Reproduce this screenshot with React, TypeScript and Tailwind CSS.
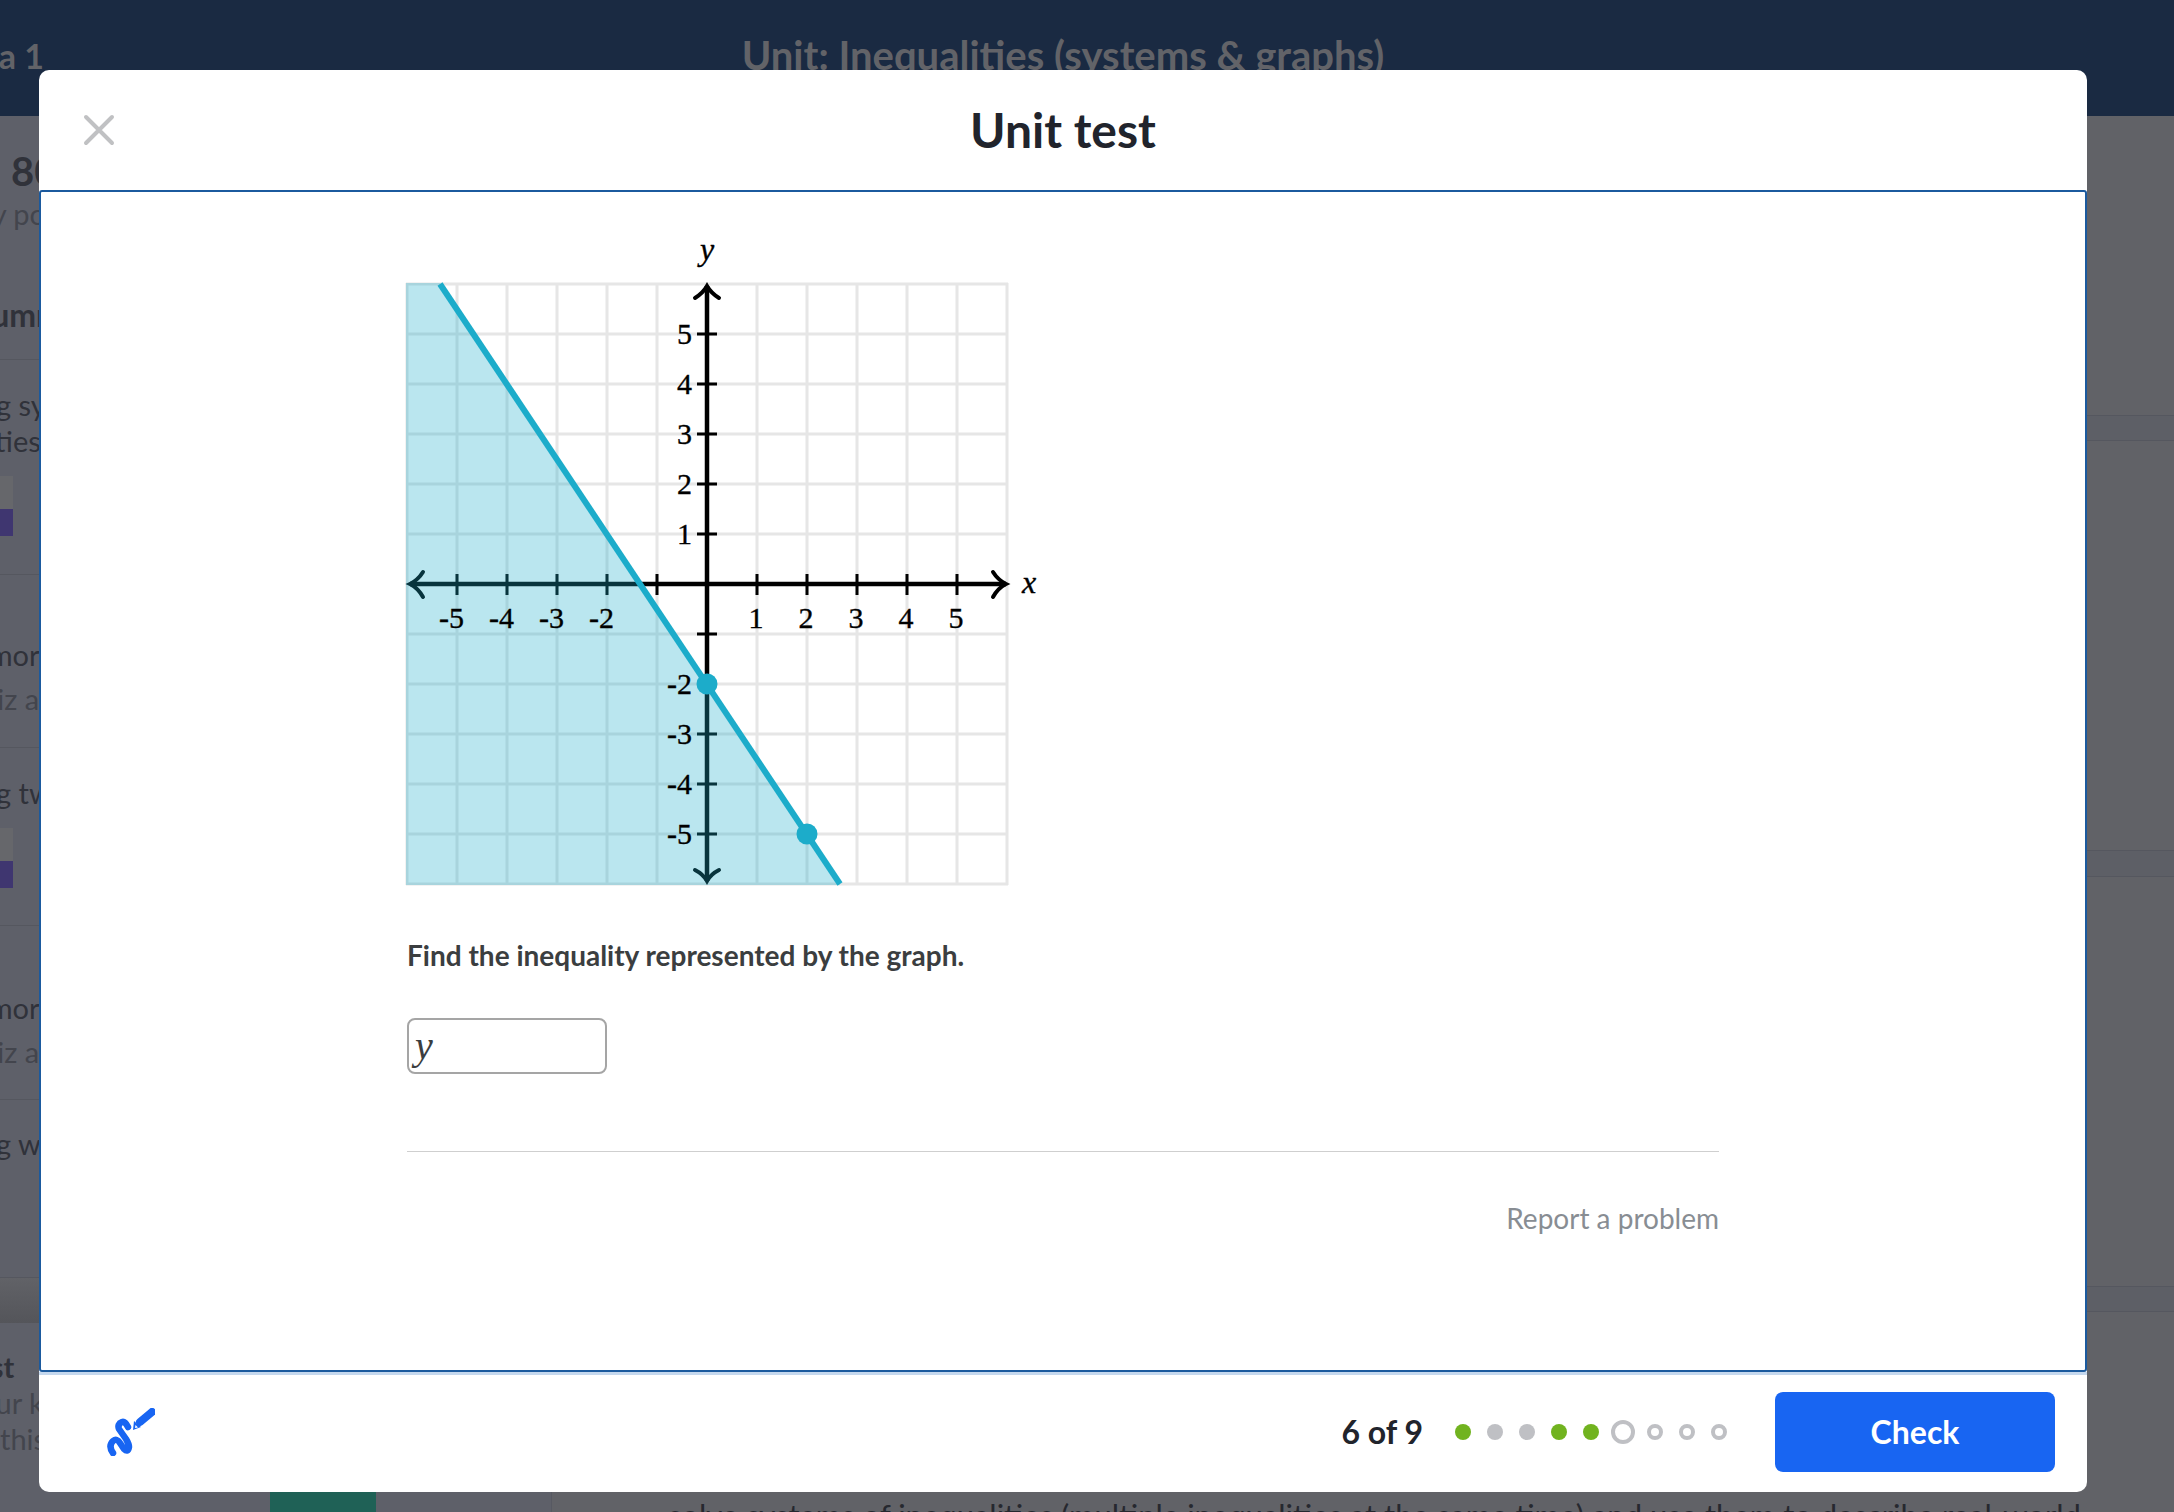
import React from "react";

const lato = '[font-family:Lato,"Liberation_Sans",sans-serif]';

function Graph() {
  const grid: number[] = [];
  for (let i = 0; i <= 12; i++) grid.push(408 + i * 50);
  const gridY: number[] = [];
  for (let i = 0; i <= 12; i++) gridY.push(283 + i * 50);
  const ox = 708;
  const oy = 583;
  const ticks = [-5, -4, -3, -2, -1, 1, 2, 3, 4, 5];
  const serif = '"Liberation Serif", serif';
  return (
    <svg width={650} height={660} viewBox="401 229 650 660" className="block">
      {grid.map((x) => (
        <line key={"v" + x} x1={x} y1={282} x2={x} y2={884} stroke="#e6e6e6" strokeWidth={3} />
      ))}
      {gridY.map((y) => (
        <line key={"h" + y} x1={407} y1={y} x2={1009} y2={y} stroke="#e6e6e6" strokeWidth={3} />
      ))}
      <line x1={411} y1={oy} x2={1007} y2={oy} stroke="#000" strokeWidth={4.5} />
      <line x1={ox} y1={285} x2={ox} y2={880} stroke="#000" strokeWidth={4.5} />
      <path d="M424 571 Q419 579 411 583 Q419 587 424 596" fill="none" stroke="#000" strokeWidth={4} strokeLinecap="round" />
      <path d="M994 571 Q999 579 1007 583 Q999 587 994 596" fill="none" stroke="#000" strokeWidth={4} strokeLinecap="round" />
      <path d="M696 297 Q704 292 708 285 Q712 292 720 297" fill="none" stroke="#000" strokeWidth={4} strokeLinecap="round" />
      <path d="M696 869 Q704 873 708 880 Q712 873 720 869" fill="none" stroke="#000" strokeWidth={4} strokeLinecap="round" />
      {ticks.map((t) => (
        <line key={"tx" + t} x1={ox + t * 50} y1={573} x2={ox + t * 50} y2={594} stroke="#000" strokeWidth={3} />
      ))}
      {ticks.map((t) => (
        <line key={"ty" + t} x1={698} y1={oy + t * 50} x2={718} y2={oy + t * 50} stroke="#000" strokeWidth={3} />
      ))}
      <polygon points="407,282 441,282 841,884 407,884" fill="#1cacca" fillOpacity={0.3} />
      <line x1={441} y1={283} x2={841} y2={883} stroke="#1cacca" strokeWidth={6} />
      <circle cx={708} cy={683} r={10.5} fill="#1cacca" />
      <circle cx={808} cy={833} r={10.5} fill="#1cacca" />
      <g fontFamily={serif} fontSize={30} fill="#000" stroke="#000" strokeWidth={0.35}>
        {[1, 2, 3, 4, 5].map((n) => (
          <text key={"xl" + n} x={ox + n * 50 - 1} y={627} textAnchor="middle">
            {n}
          </text>
        ))}
        {[-5, -4, -3, -2].map((n) => (
          <text key={"xn" + n} x={ox + n * 50 + 7} y={627} textAnchor="end">
            {n}
          </text>
        ))}
        {[5, 4, 3, 2, 1, -2, -3, -4, -5].map((n) => (
          <text key={"yl" + n} x={693} y={oy - n * 50 + 10} textAnchor="end">
            {n}
          </text>
        ))}
        <text x={708} y={259} textAnchor="middle" fontStyle="italic" fontSize={32}>
          y
        </text>
        <text x={1030} y={592} textAnchor="middle" fontStyle="italic" fontSize={32}>
          x
        </text>
      </g>
    </svg>
  );
}

function PencilIcon() {
  return (
    <svg width={48} height={48} viewBox="0 0 48 48" className="block">
      <path
        d="M6 45 Q1 38 6 33 Q10 30 13 35 L17 41 Q21 45 22 39 Q22 36 19 31 L12 21 Q10 16 15 14 Q18 13 21 19"
        fill="none"
        stroke="#1865f2"
        strokeWidth={6.5}
        strokeLinecap="round"
        strokeLinejoin="round"
      />
      <path d="M33 14 L45 4" stroke="#1865f2" strokeWidth={8} strokeLinecap="round" />
      <path d="M26 22 L27 13 L34 19 Z" fill="#1865f2" />
      <path d="M28 20 L28.5 17 L31 19.5 Z" fill="#fff" />
    </svg>
  );
}

function Dots() {
  const items = ["g", "x", "x", "g", "g", "big", "o", "o", "o"];
  return (
    <div className="flex items-center">
      {items.map((k, i) => (
        <div key={i} className="flex h-[32px] w-[32px] items-center justify-center">
          {k === "g" && <div className="h-[16px] w-[16px] rounded-full bg-[#71b31f]" />}
          {k === "x" && <div className="h-[16px] w-[16px] rounded-full bg-[#bfc0c4]" />}
          {k === "big" && <div className="h-[24px] w-[24px] rounded-full border-[4px] border-[#bfc0c4]" />}
          {k === "o" && <div className="h-[16px] w-[16px] rounded-full border-[4px] border-[#bfc0c4]" />}
        </div>
      ))}
    </div>
  );
}

type Line = { t: string; shift: number; className: string };

function LeftRow({ h, lines, chart }: { h: number; lines: Line[]; chart?: boolean }) {
  return (
    <div className="shrink-0 overflow-hidden border-b border-[#55575f]" style={{ height: h }}>
      <div className="whitespace-nowrap">
        {lines.map((l, i) => (
          <div key={i} className={l.className + " text-[29px] leading-[36px]"} style={{ marginLeft: -l.shift }}>
            {l.t}
          </div>
        ))}
      </div>
      {chart && (
        <div className="mt-[17px] w-[13px]">
          <div className="h-[33px] bg-[#66676b]" />
          <div className="h-[27px] bg-[#3f3670]" />
        </div>
      )}
    </div>
  );
}

export default function App() {
  const dark = "text-[#30323a]";
  const soft = "text-[#43454d]";
  return (
    <div className={"relative h-[1512px] w-[2174px] overflow-hidden bg-[#616267] " + lato}>
      <header className="grid h-[116px] grid-cols-[1fr_auto_1fr] items-center bg-[#1a2a42] pb-[6px] pr-[48px]">
        <div className="flex w-[44px] justify-end whitespace-nowrap text-[34px] font-bold text-[#626368]">Algebra 1</div>
        <div className="text-[40px] font-bold text-[#626368]">Unit: Inequalities (systems &amp; graphs)</div>
        <div />
      </header>
      <div className="flex h-[1396px]">
        <aside className="flex w-[552px] shrink-0 flex-col overflow-hidden border-r border-[#575962] bg-[#5e6069]">
          <div className="h-[244px] shrink-0 overflow-hidden border-b border-[#55575f] pt-[30px] whitespace-nowrap">
            <div className="ml-[11px] text-[40px] font-bold leading-[50px] text-[#30323a]">80%</div>
            <div className="-ml-[98px] text-[29px] leading-[36px] text-[#43454d]">Mastery points</div>
            <div className="-ml-[26px] mt-[63px] text-[32px] font-bold leading-[40px] text-[#30323a]">Summary</div>
          </div>
          <LeftRow
            h={215}
            chart
            lines={[
              { t: "Solving systems of", shift: 81, className: dark + " pt-[27px]" },
              { t: "inequalities", shift: 104, className: dark },
            ]}
          />
          <LeftRow
            h={173}
            lines={[
              { t: "Learn more", shift: 89, className: dark + " pt-[62px]" },
              { t: "Take quiz again", shift: 100, className: soft + " pt-[8px]" },
            ]}
          />
          <LeftRow h={178} chart lines={[{ t: "Solving two-step", shift: 81, className: dark + " pt-[27px]" }]} />
          <LeftRow
            h={174}
            lines={[
              { t: "Learn more", shift: 89, className: dark + " pt-[64px]" },
              { t: "Take quiz again", shift: 100, className: soft + " pt-[8px]" },
            ]}
          />
          <LeftRow h={178} lines={[{ t: "Solving word problems", shift: 81, className: dark + " pt-[26px]" }]} />
          <div className="h-[45px] shrink-0 bg-gradient-to-b from-[#616267] to-[#54555a]" />
          <div className="whitespace-nowrap pt-[26px]">
            <div className="-ml-[98px] text-[29px] font-bold leading-[36px] text-[#30323a]">Unit test</div>
            <div className="-ml-[94px] text-[29px] leading-[36px] text-[#43454d]">Test your knowledge</div>
            <div className="text-[29px] leading-[36px] text-[#43454d]">this unit</div>
          </div>
          <div className="ml-[270px] mt-auto h-[20px] w-[106px] shrink-0 bg-[#1f6156]" />
        </aside>
        <main className="min-w-0 flex-1 overflow-hidden">
          <div className="h-[299px]" />
          <div className="h-[26px] border-y border-[#55575f] bg-[#5d5f66]" />
          <div className="h-[409px]" />
          <div className="h-[27px] border-y border-[#55575f] bg-[#5d5f66]" />
          <div className="h-[409px]" />
          <div className="h-[26px] border-y border-[#55575f] bg-[#5d5f66]" />
          <div className="whitespace-nowrap pl-[116px] pt-[185px] text-[31px] leading-[36px] text-[#26282f]">
            solve systems of inequalities (multiple inequalities at the same time) and use them to describe real-world
          </div>
        </main>
      </div>

      <div className="absolute left-[39px] top-[70px] flex h-[1422px] w-[2048px] flex-col overflow-hidden rounded-[10px] bg-white">
        <div className="grid h-[120px] shrink-0 grid-cols-[1fr_auto_1fr] items-center px-[44px]">
          <svg width={32} height={32} viewBox="0 0 32 32" className="block">
            <path d="M3 3 L29 29 M29 3 L3 29" stroke="#c0c1c3" strokeWidth={4} strokeLinecap="round" />
          </svg>
          <div className="text-[48px] font-bold leading-none text-[#21242c]">Unit test</div>
          <div />
        </div>
        <div className="h-[1182px] shrink-0 rounded-[3px] border-2 border-[#1b5a9e] pl-[359px] pt-[38px]">
          <Graph />
          <div className="pl-[7px]">
            <div className="mt-[45px] text-[28px] font-bold leading-[40px] text-[#3b3e40]">
              Find the inequality represented by the graph.
            </div>
            <div className="mt-[43px] flex h-[56px] w-[200px] items-center rounded-[8px] border-2 border-[#a5a5a5] pl-[6px]">
              <span className='text-[40px] italic leading-none text-[#3b3e40] [font-family:"Liberation_Serif",serif]'>y</span>
            </div>
            <div className="mt-[77px] h-[1px] w-[1312px] bg-[#cfcfcf]" />
            <div className="mt-[46px] w-[1312px] text-right text-[28px] leading-[40px] text-[#888d93]">Report a problem</div>
          </div>
        </div>
        <div className="flex flex-1 items-center justify-between border-t-[3px] border-[#c5d8ee] pb-[3px] pl-[68px] pr-[32px]">
          <PencilIcon />
          <div className="flex items-center">
            <div className="mr-[24px] text-[32px] font-bold text-[#21242c]">6 of 9</div>
            <Dots />
            <div className="ml-[40px] flex h-[80px] w-[280px] items-center justify-center rounded-[8px] bg-[#1865f2] text-[32px] font-bold text-white">
              Check
            </div>
          </div>
        </div>
      </div>
    </div>
  );
}
